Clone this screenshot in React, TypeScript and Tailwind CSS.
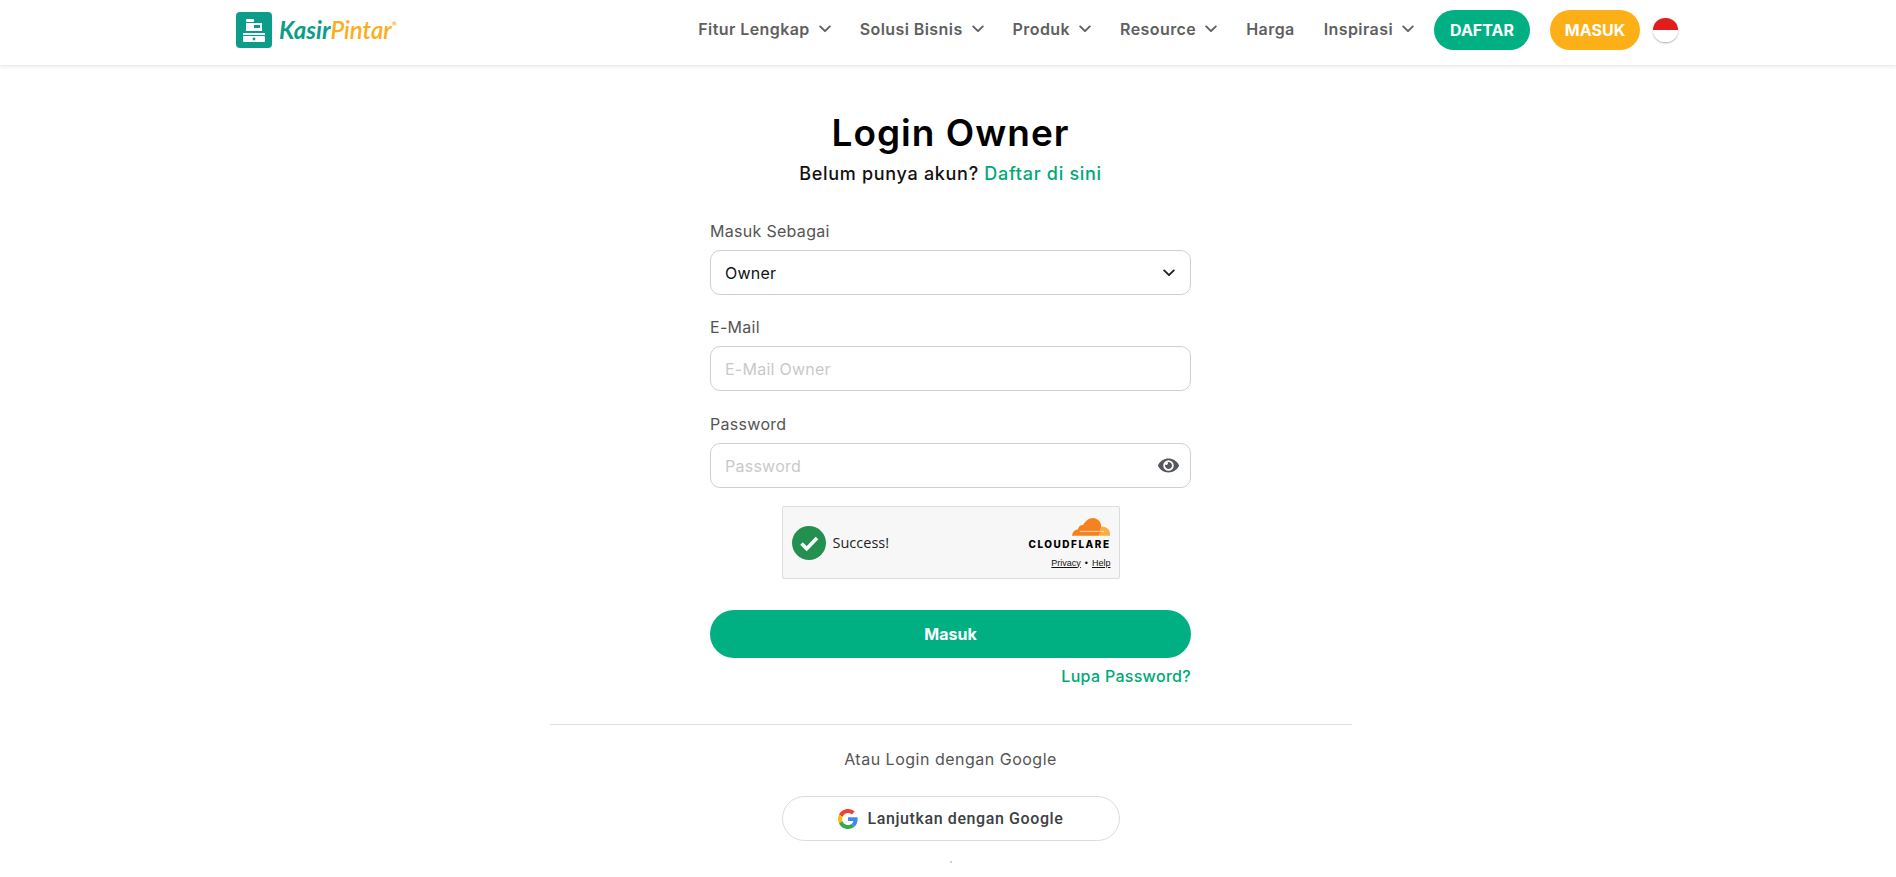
import React from "react";
import { FaEye } from "react-icons/fa";

const FONT = "font-['Inter','Open_Sans',sans-serif]";

const Chevron: React.FC<{ className?: string }> = ({ className }) => (
  <svg viewBox="0 0 12 8" fill="none" className={className}>
    <path d="M1.2 1.4 6 6.2l4.8-4.8" stroke="currentColor" strokeWidth="1.9" strokeLinecap="round" strokeLinejoin="round" />
  </svg>
);

const NavItem: React.FC<{ label: string; caret?: boolean }> = ({ label, caret = true }) => (
  <a className="flex items-center gap-[9px] text-[16px] font-semibold tracking-[0.42px] text-[#5f5f5f]">
    {label}
    {caret && <Chevron className="w-3 h-2" />}
  </a>
);

const Logo: React.FC = () => (
  <div className="flex items-center gap-[7px]">
    <svg viewBox="0 0 36 36" className="w-9 h-9">
      <rect width="36" height="36" rx="4" fill="#0b9d8a" />
      <rect x="10" y="7" width="8" height="3" rx="1" fill="#fff" />
      <path d="M10 11h16v8H10z" fill="#fff" />
      <rect x="18" y="13" width="6" height="3" fill="#0b9d8a" />
      <rect x="7" y="21" width="22" height="2" fill="#fff" />
      <rect x="7" y="24" width="22" height="6" rx="1" fill="#fff" />
      <circle cx="18" cy="27" r="1.4" fill="#0b9d8a" />
    </svg>
    <div className="flex items-start text-[24px] leading-none italic font-bold font-['Lato',sans-serif]">
      <span className="text-[#0b9d8a]">Kasir</span>
      <span className="text-[#fbae1a] font-semibold">Pintar</span>
      <span className="text-[6px] text-[#fbae1a] mt-[3px]">®</span>
    </div>
  </div>
);

const Flag: React.FC = () => (
  <div className="w-[25px] h-[24px] rounded-full overflow-hidden flex flex-col shadow-[0_1px_2px_rgba(0,0,0,0.35)]">
    <div className="flex-1 bg-[#e31d1c]" />
    <div className="flex-1 bg-white" />
  </div>
);

const Navbar: React.FC = () => (
  <header className="h-[65px] pb-[5px] bg-white shadow-[0_1px_4px_rgba(0,0,0,0.12)] flex items-center justify-between pl-[236px] pr-[218px]">
    <Logo />
    <nav className="flex items-center">
      <div className="flex items-center gap-[29px] mr-5 pb-[2px]">
        <NavItem label="Fitur Lengkap" />
        <NavItem label="Solusi Bisnis" />
        <NavItem label="Produk" />
        <NavItem label="Resource" />
        <NavItem label="Harga" caret={false} />
        <NavItem label="Inspirasi" />
      </div>
      <a className="w-24 h-10 rounded-full bg-[#00b083] text-white text-[16px] font-bold flex items-center justify-center">DAFTAR</a>
      <a className="w-[90px] h-10 rounded-full bg-[#fdaf17] text-white text-[16px] font-bold flex items-center justify-center ml-5 mr-[13px]">MASUK</a>
      <Flag />
    </nav>
  </header>
);

const Field: React.FC<{ label: string; className?: string; children: React.ReactNode }> = ({ label, className, children }) => (
  <div className={className}>
    <label className="block text-[16px] leading-[19px] tracking-[0.3px] font-normal text-[#555] mb-[9px]">{label}</label>
    {children}
  </div>
);

const boxClass =
  "w-full h-[45px] rounded-[10px] border border-[#cdd1d6] bg-white px-[14px] text-[16px] tracking-[0.25px] flex items-center justify-between";

const Turnstile: React.FC = () => (
  <div className="w-[338px] h-[73px] mx-auto mt-[18px] border border-[#dcdcdc] rounded-[2px] bg-[#f7f7f7] flex items-center justify-between pl-[9px] pr-[8px]">
    <div className="flex items-center gap-[7px]">
      <svg viewBox="0 0 34 34" className="w-[34px] h-[34px]">
        <circle cx="17" cy="17" r="17" fill="#24904f" />
        <path d="M9.5 17.5l5.2 5.2L25 12" fill="none" stroke="#fff" strokeWidth="3.6" />
      </svg>
      <span className="text-[14.5px] font-normal text-[#232323] font-['Open_Sans',sans-serif]">Success!</span>
    </div>
    <div className="flex flex-col items-end">
      <svg viewBox="0 0 40 20" className="w-[39px] h-[20px]">
        <path
          d="M0 19c.5-4 3-6.5 6-6.5.6-3 3-5 5.400-4.500C14 3 19 0 23 1c4.500 1 7 4.500 7 8.500l-2 9.500z"
          fill="#f6821f"
        />
        <path d="M28 19l2-9c4-1 8 1.500 9 6l0 3z" fill="#fbad41" />
        <path d="M8 14.500h20.500M30 14.500h3" stroke="#f7f7f7" strokeWidth="0.7" />
      </svg>
      <span className="text-[10px] leading-[13px] font-extrabold tracking-[1.5px] text-black font-['Inter',sans-serif] mt-px">CLOUDFLARE</span>
      <div className="flex items-center gap-[4px] mt-[6px] text-[9px] leading-[12px] text-[#111] font-['Liberation_Sans',sans-serif]">
        <a className="underline">Privacy</a>
        <span>•</span>
        <a className="underline">Help</a>
      </div>
    </div>
  </div>
);

const GoogleIcon: React.FC = () => (
  <svg viewBox="0 0 48 48" className="w-5 h-5">
    <path fill="#EA4335" d="M24 9.500c3.540 0 6.710 1.220 9.210 3.600l6.850-6.850C35.900 2.380 30.470 0 24 0 14.620 0 6.510 5.380 2.560 13.220l7.980 6.190C12.430 13.720 17.740 9.500 24 9.500z" />
    <path fill="#4285F4" d="M46.980 24.550c0-1.570-.15-3.090-.38-4.550H24v9.020h12.940c-.58 2.960-2.260 5.480-4.780 7.180l7.730 6c4.510-4.180 7.090-10.360 7.090-17.650z" />
    <path fill="#FBBC05" d="M10.530 28.590c-.48-1.450-.76-2.990-.76-4.590s.27-3.140.76-4.590l-7.980-6.190C.92 16.460 0 20.120 0 24c0 3.880.92 7.540 2.560 10.780l7.970-6.190z" />
    <path fill="#34A853" d="M24 48c6.480 0 11.930-2.130 15.890-5.810l-7.730-6c-2.150 1.450-4.920 2.300-8.160 2.300-6.260 0-11.570-4.220-13.470-9.910l-7.980 6.190C6.510 42.620 14.620 48 24 48z" />
  </svg>
);

const App: React.FC = () => {
  return (
    <div className={`h-[877px] overflow-hidden bg-white ${FONT}`}>
      <Navbar />
      <main className="flex flex-col items-center pl-[5px]">
        <h1 className="mt-[44px] text-[37px] leading-[48px] font-semibold tracking-[1px] text-black">Login Owner</h1>
        <p className="mt-[5px] text-[18px] leading-[24px] font-medium tracking-[0.7px] text-[#111]">
          Belum punya akun? <a className="text-[#00a878]">Daftar di sini</a>
        </p>

        <form className="w-[481px] mt-[36px]">
          <Field label="Masuk Sebagai">
            <div className={`${boxClass} text-[#111]`}>
              Owner
              <Chevron className="w-3 h-2 text-[#222] mr-[1px]" />
            </div>
          </Field>
          <Field label="E-Mail" className="mt-[23px]">
            <div className={boxClass}>
              <input placeholder="E-Mail Owner" className="w-full outline-none placeholder:text-[#c9c9c9] tracking-[0.25px]" />
            </div>
          </Field>
          <Field label="Password" className="mt-[24px]">
            <div className={boxClass}>
              <input placeholder="Password" className="w-full outline-none placeholder:text-[#c9c9c9] tracking-[0.25px]" />
              <FaEye className="shrink-0 w-[21px] h-[21px] text-[#55585c] -mr-[3px]" />
            </div>
          </Field>

          <Turnstile />

          <button type="button" className="block w-full h-[48px] mt-[31px] rounded-full bg-[#00b083] text-white text-[16px] font-bold">
            Masuk
          </button>
          <div className="mt-[6px] text-right">
            <a className="text-[16px] leading-[20px] tracking-[0.3px] font-medium text-[#00a878]">Lupa Password?</a>
          </div>
        </form>

        <hr className="w-[802px] mt-[36px] border-[#dfdfdf]" />
        <p className="mt-[24px] text-[16px] leading-[20px] tracking-[0.5px] font-normal text-[#555]">Atau Login dengan Google</p>
        <button type="button" className="w-[338px] h-[45px] mt-[27px] rounded-full border border-[#dadce0] flex items-center justify-center gap-[10px] text-[16px] font-medium tracking-[0.6px] text-[#3c4043] font-['Roboto',sans-serif]">
          <GoogleIcon />
          Lanjutkan dengan Google
        </button>
        <div className="w-[2px] h-[2px] mt-5 bg-[#cfcfcf]" />
      </main>
    </div>
  );
};

export default App;
